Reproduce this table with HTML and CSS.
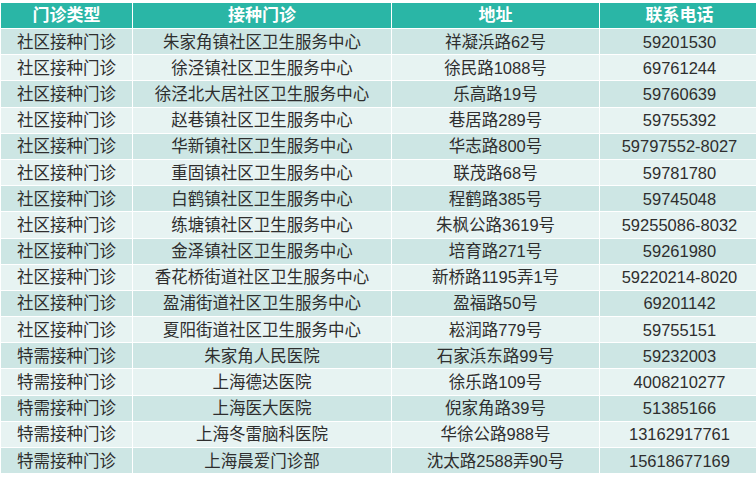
FILE: index.html
```html
<!DOCTYPE html>
<html lang="zh-CN">
<head>
<meta charset="utf-8">
<title>接种门诊</title>
<link rel="stylesheet" href="styles.css">
</head>
<body>
<table class="clinics">
  <thead>
    <tr><th class="c1">门诊类型</th><th class="c2">接种门诊</th><th class="c3">地址</th><th class="c4">联系电话</th></tr>
  </thead>
  <tbody>
    <tr><td>社区接种门诊</td><td>朱家角镇社区卫生服务中心</td><td>祥凝浜路62号</td><td>59201530</td></tr>
    <tr><td>社区接种门诊</td><td>徐泾镇社区卫生服务中心</td><td>徐民路1088号</td><td>69761244</td></tr>
    <tr><td>社区接种门诊</td><td>徐泾北大居社区卫生服务中心</td><td>乐高路19号</td><td>59760639</td></tr>
    <tr><td>社区接种门诊</td><td>赵巷镇社区卫生服务中心</td><td>巷居路289号</td><td>59755392</td></tr>
    <tr><td>社区接种门诊</td><td>华新镇社区卫生服务中心</td><td>华志路800号</td><td>59797552-8027</td></tr>
    <tr><td>社区接种门诊</td><td>重固镇社区卫生服务中心</td><td>联茂路68号</td><td>59781780</td></tr>
    <tr><td>社区接种门诊</td><td>白鹤镇社区卫生服务中心</td><td>程鹤路385号</td><td>59745048</td></tr>
    <tr><td>社区接种门诊</td><td>练塘镇社区卫生服务中心</td><td>朱枫公路3619号</td><td>59255086-8032</td></tr>
    <tr><td>社区接种门诊</td><td>金泽镇社区卫生服务中心</td><td>培育路271号</td><td>59261980</td></tr>
    <tr><td>社区接种门诊</td><td>香花桥街道社区卫生服务中心</td><td>新桥路1195弄1号</td><td>59220214-8020</td></tr>
    <tr><td>社区接种门诊</td><td>盈浦街道社区卫生服务中心</td><td>盈福路50号</td><td>69201142</td></tr>
    <tr><td>社区接种门诊</td><td>夏阳街道社区卫生服务中心</td><td>崧润路779号</td><td>59755151</td></tr>
    <tr><td>特需接种门诊</td><td>朱家角人民医院</td><td>石家浜东路99号</td><td>59232003</td></tr>
    <tr><td>特需接种门诊</td><td>上海德达医院</td><td>徐乐路109号</td><td>4008210277</td></tr>
    <tr><td>特需接种门诊</td><td>上海医大医院</td><td>倪家角路39号</td><td>51385166</td></tr>
    <tr><td>特需接种门诊</td><td>上海冬雷脑科医院</td><td>华徐公路988号</td><td>13162917761</td></tr>
    <tr><td>特需接种门诊</td><td>上海晨爱门诊部</td><td>沈太路2588弄90号</td><td>15618677169</td></tr>
  </tbody>
</table>
</body>
</html>
```
FILE: styles.css
```css
html, body {
  margin: 0;
  padding: 0;
  background: #ffffff;
}
body {
  padding: 2px 0 0 0;
  font-family: "Liberation Sans", "Noto Sans CJK SC", sans-serif;
}
.clinics {
  border-collapse: separate;
  border-spacing: 1px;
  width: 760px;
  table-layout: fixed;
  font-size: 16.5px;
  color: #2e2e2e;
}
.clinics th, .clinics td {
  padding: 0;
  text-align: center;
  vertical-align: middle;
  line-height: 18px;
  white-space: nowrap;
  overflow: hidden;
}
.clinics th {
  height: 25px;
  background: #2ab6a6;
  color: #ffffff;
  font-weight: bold;
  font-size: 17px;
}
.clinics td {
  height: 25.2px;
}
.c1 { width: 131px; }
.c2 { width: 258px; }
.c3 { width: 207px; }
.c4 { width: auto; }
.clinics tbody tr:nth-child(odd) td {
  background: #cde6e4;
}
.clinics tbody tr:nth-child(even) td {
  background: #e7f3f2;
}
```
